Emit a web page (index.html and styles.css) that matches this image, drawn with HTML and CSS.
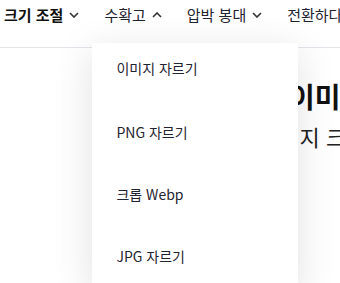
FILE: index.html
```html
<!DOCTYPE html>
<html lang="ko">
<head>
<meta charset="utf-8">
<link rel="stylesheet" href="styles.css">
</head>
<body>
<header class="nav">
  <div class="nav-item bold">크기 조절 <svg class="chev" viewBox="0 0 10 6"><path d="M1 1l4 4 4-4"/></svg></div>
  <div class="nav-item open">수확고 <svg class="chev" viewBox="0 0 10 6"><path d="M1 5l4-4 4 4"/></svg>
    <ul class="menu">
      <li>이미지 자르기</li>
      <li>PNG 자르기</li>
      <li>크롭 Webp</li>
      <li>JPG 자르기</li>
    </ul>
  </div>
  <div class="nav-item">압박 봉대 <svg class="chev" viewBox="0 0 10 6"><path d="M1 1l4 4 4-4"/></svg></div>
  <div class="nav-item">전환하다 <svg class="chev" viewBox="0 0 10 6"><path d="M1 1l4 4 4-4"/></svg></div>
</header>
<main class="hero">
  <h1 class="title">이미지 자르기</h1>
  <p class="sub">이미지 크롭 도구</p>
</main>
</body>
</html>
```
FILE: styles.css
```css
html, body {
  margin: 0;
  padding: 0;
  background: #fff;
  overflow: hidden;
  width: 340px;
  height: 283px;
}
body {
  font-family: "Noto Sans CJK KR", "Noto Sans", sans-serif;
  color: #1f2430;
}
.nav {
  display: flex;
  align-items: flex-start;
  height: 43px;
  padding: 4px 0 0 4px;
  border-bottom: 1px solid #e3e5ea;
  white-space: nowrap;
  gap: 25px;
  font-size: 15px;
}
.nav-item {
  display: flex;
  align-items: center;
  position: relative;
  line-height: 22px;
}
.nav-item.bold {
  font-weight: 700;
  color: #111;
}
.chev {
  width: 10px;
  height: 6px;
  margin-left: 6px;
  fill: none;
  stroke: #333;
  stroke-width: 1.6;
}
.menu {
  position: absolute;
  left: -12px;
  top: 39px;
  width: 206px;
  margin: 0;
  padding: 0;
  list-style: none;
  background: #fff;
  border-radius: 0 0 8px 8px;
  box-shadow: 0 8px 40px rgba(0, 0, 0, 0.12);
  z-index: 10;
  font-weight: 400;
}
.menu li {
  padding: 14px 24px 26px;
  line-height: 22px;
  font-size: 14px;
  color: #1f2430;
}
.menu li + li {
  padding-top: 16px;
  padding-bottom: 24px;
}
.hero {
  padding-left: 259px;
  white-space: nowrap;
}
.title {
  margin: 28px 0 0 30px;
  font-size: 28px;
  line-height: 40px;
  font-weight: 700;
  color: #111;
}
.sub {
  margin: 5px 0 0 0;
  font-size: 22px;
  line-height: 30px;
  color: #222;
}
```
